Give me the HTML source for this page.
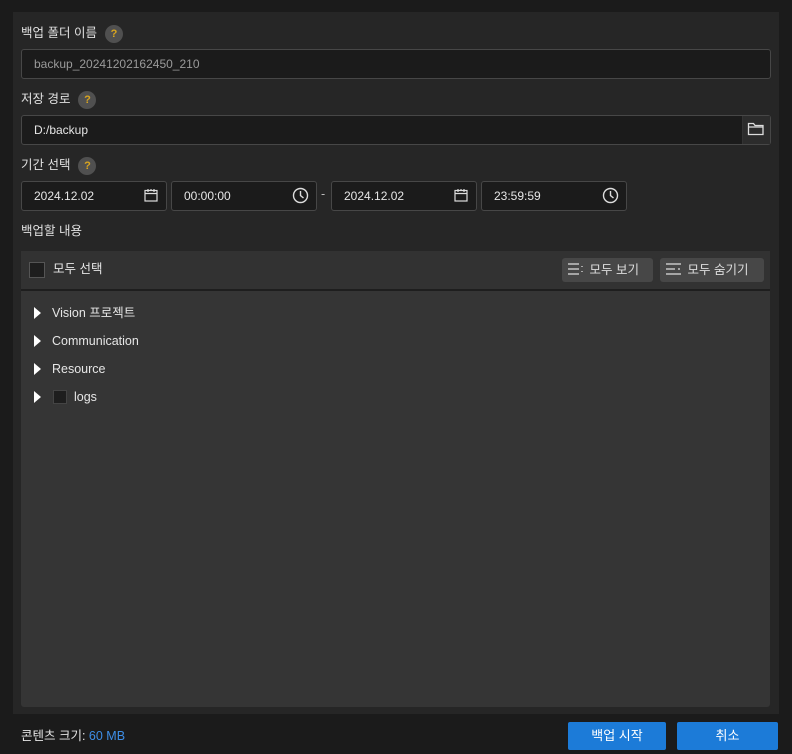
<!DOCTYPE html>
<html><head><meta charset="utf-8"><style>
*{box-sizing:border-box;margin:0;padding:0}
body{width:792px;height:754px;background:#1b1b1b;font-family:"Liberation Sans","Noto Sans CJK KR",sans-serif;color:#e6e6e6;font-size:12.5px;position:relative;overflow:hidden}
.abs{position:absolute}
.panel{left:13px;top:12px;width:766px;height:702px;background:#262626}
.lbl{font-size:12.5px;color:#e0e0e0}
.q{display:inline-block;width:18px;height:18px;border-radius:50%;background:#505050;color:#d9a520;font-size:11px;font-weight:bold;text-align:center;line-height:18px;vertical-align:middle;margin-left:8px}
.inp{background:#1b1b1b;border:1px solid #474747;border-radius:3px;height:30px;line-height:28px;padding-left:12px;font-size:12px}
.btn{background:#1c7bd8;color:#fff;border-radius:2px;text-align:center;line-height:28px;font-size:13px;height:28px;top:722px}
.sbtn{background:#474747;border-radius:3px;height:24px;top:258px;line-height:24px;font-size:12.5px;color:#ddd;padding-left:6px}
.tri{width:0;height:0;border-top:6px solid transparent;border-bottom:6px solid transparent;border-left:7px solid #fff}
.tr{left:52px;font-size:12.5px;line-height:16px}
</style></head><body>
<div class="abs panel"></div>
<div class="abs lbl" style="left:21px;top:22px">백업 폴더 이름<span class="q">?</span></div>
<div class="abs inp" style="left:21px;top:49px;width:750px;color:#9a9a9a">backup_20241202162450_210</div>
<div class="abs lbl" style="left:21px;top:88px">저장 경로<span class="q">?</span></div>
<div class="abs inp" style="left:21px;top:115px;width:750px">D:/backup</div>
<div class="abs" style="left:742px;top:116px;width:28px;height:28px;background:#2c2c2c;border-left:1px solid #333"></div>
<svg class="abs" style="left:747px;top:121px" width="18" height="16" viewBox="0 0 18 16" fill="none" stroke="#ddd" stroke-width="1.3"><path d="M1.5 2.5h5l1.5 2h8v9h-14.5z M1.5 6h15"/></svg>
<div class="abs lbl" style="left:21px;top:154px">기간 선택<span class="q">?</span></div>
<div class="abs inp" style="left:21px;top:181px;width:146px">2024.12.02</div>
<div class="abs inp" style="left:171px;top:181px;width:146px">00:00:00</div>
<div class="abs" style="left:321px;top:187px;color:#bbb">-</div>
<div class="abs inp" style="left:331px;top:181px;width:146px">2024.12.02</div>
<div class="abs inp" style="left:481px;top:181px;width:146px">23:59:59</div>
<svg class="abs" style="left:144px;top:188px" width="14" height="14" viewBox="0 0 14 14" fill="none" stroke="#ddd" stroke-width="1.2"><rect x="1" y="2.5" width="12" height="10.5"/><path d="M1 5.5h12M4 1v3M10 1v3M7 1v2"/></svg>
<svg class="abs" style="left:454px;top:188px" width="14" height="14" viewBox="0 0 14 14" fill="none" stroke="#ddd" stroke-width="1.2"><rect x="1" y="2.5" width="12" height="10.5"/><path d="M1 5.5h12M4 1v3M10 1v3M7 1v2"/></svg>
<svg class="abs" style="left:292px;top:187px" width="17" height="17" viewBox="0 0 17 17" fill="none" stroke="#ddd" stroke-width="1.4"><circle cx="8.5" cy="8.5" r="7"/><path d="M8.5 4v4.5l3 2.5"/></svg>
<svg class="abs" style="left:602px;top:187px" width="17" height="17" viewBox="0 0 17 17" fill="none" stroke="#ddd" stroke-width="1.4"><circle cx="8.5" cy="8.5" r="7"/><path d="M8.5 4v4.5l3 2.5"/></svg>
<div class="abs lbl" style="left:21px;top:220px">백업할 내용</div>
<div class="abs" style="left:21px;top:251px;width:749px;height:456px;background:#353535;border-radius:3px"></div>
<div class="abs" style="left:21px;top:251px;width:749px;height:40px;background:#323232;border-bottom:2px solid #1e1e1e"></div>
<div class="abs" style="left:29px;top:262px;width:16px;height:16px;background:#1e1e1e;border:1px solid #555"></div>
<div class="abs" style="left:53px;top:261px;line-height:16px">모두 선택</div>
<div class="abs sbtn" style="left:562px;width:91px"><svg width="18" height="12" viewBox="0 0 18 12" style="vertical-align:-1px" fill="none" stroke="#ddd" stroke-width="1.3"><path d="M0 1h11M0 6h11M0 11h11M14 3v1M14 8v1"/></svg> 모두 보기</div>
<div class="abs sbtn" style="left:660px;width:104px"><svg width="18" height="12" viewBox="0 0 18 12" style="vertical-align:-1px" fill="none" stroke="#ddd" stroke-width="1.3"><path d="M0 1h15M0 6h9M0 11h15M12 6h2"/></svg> 모두 숨기기</div>
<div class="abs tri" style="left:34px;top:307px"></div><div class="abs tr" style="top:305px">Vision 프로젝트</div>
<div class="abs tri" style="left:34px;top:335px"></div><div class="abs tr" style="top:333px">Communication</div>
<div class="abs tri" style="left:34px;top:363px"></div><div class="abs tr" style="top:361px">Resource</div>
<div class="abs tri" style="left:34px;top:391px"></div>
<div class="abs" style="left:53px;top:390px;width:14px;height:14px;background:#1e1e1e;border:1px solid #444"></div>
<div class="abs tr" style="left:74px;top:389px">logs</div>
<div class="abs" style="left:21px;top:728px;font-size:12.5px;line-height:16px">콘텐츠 크기: <span style="color:#3d8ee8">60 MB</span></div>
<div class="abs btn" style="left:568px;width:98px">백업 시작</div>
<div class="abs btn" style="left:677px;width:101px">취소</div>
</body></html>
